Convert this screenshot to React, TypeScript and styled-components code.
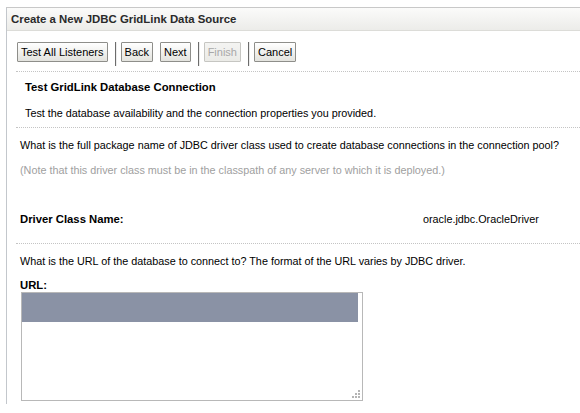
import React from 'react';
import styled, { createGlobalStyle } from 'styled-components';

const GlobalStyle = createGlobalStyle`
  html, body {
    margin: 0;
    padding: 0;
    background: #fff;
    overflow: hidden;
  }
  body {
    font-family: 'Liberation Sans', Arial, sans-serif;
    font-size: 10.8px;
    color: #000;
  }
`;

const Frame = styled.div`
  margin: 7px 0 0 6px;
  border-top: 1px solid #c8c8c8;
  border-left: 1px solid #c3c7cc;
  padding-bottom: 3px;
`;

const Header = styled.div`
  height: 22px;
  display: flex;
  align-items: center;
  padding-left: 4px;
  background: linear-gradient(#fbfbfa, #ecece9);
  border-bottom: 1px solid #dcdcd8;
  font-weight: bold;
  font-size: 11.4px;
  color: #2a2a2a;
`;

const Body = styled.div`
  padding-left: 9px;
  white-space: nowrap;
`;

const Toolbar = styled.div`
  display: flex;
  align-items: flex-start;
  padding: 11px 0 5px 1px;
  border-bottom: 1px dotted #c4c4c4;
`;

const Button = styled.button<{ $disabled?: boolean }>`
  height: 20px;
  margin-right: 7px;
  padding: 0 3px;
  font-family: inherit;
  font-size: 11px;
  color: ${(p) => (p.$disabled ? '#a8a8a8' : '#000')};
  background: ${(p) =>
    p.$disabled
      ? 'linear-gradient(#f4f4f2, #ebebe7)'
      : 'linear-gradient(#ffffff, #e3e3de)'};
  border: 1px solid ${(p) => (p.$disabled ? '#c6c6c2' : '#8e8e8a')};
  border-radius: 1px;
  cursor: default;
`;

const Separator = styled.span`
  width: 1px;
  height: 24px;
  background: #6c6c6c;
  border-right: 1px solid #ececec;
  margin: 0 4px 0 0;
`;

const Section = styled.div`
  padding-left: 9px;
  border-bottom: 1px dotted #c4c4c4;
`;

const SectionTitle = styled.div`
  font-weight: bold;
  font-size: 11.3px;
  line-height: 14px;
  padding-top: 8px;
`;

const SectionText = styled.div`
  line-height: 14px;
  padding: 12px 0 7px;
`;

const Text = styled.div<{ $muted?: boolean; $top: number }>`
  line-height: 14px;
  padding: ${(p) => p.$top}px 0 0 4px;
  color: ${(p) => (p.$muted ? '#a0a0a0' : '#000')};
`;

const FieldRow = styled.div`
  display: grid;
  grid-template-columns: 403px auto;
  line-height: 14px;
  padding: 35px 0 17px 4px;
  border-bottom: 1px dotted #c4c4c4;
`;

const Label = styled.div`
  font-weight: bold;
  font-size: 11.3px;
`;

const UrlLabel = styled(Label)`
  line-height: 13px;
  padding: 11px 0 0 4px;
`;

const UrlBox = styled.div`
  position: relative;
  margin-left: 5px;
  width: 340px;
  height: 107px;
  border: 1px solid #b8b8b8;
  background: #fff;
`;

const Selection = styled.div`
  width: 336px;
  height: 29px;
  background: #8a92a5;
`;

const Grip = styled.svg`
  position: absolute;
  right: 2px;
  bottom: 2px;
`;

export default function App() {
  return (
    <>
      <GlobalStyle />
      <Frame>
        <Header>Create a New JDBC GridLink Data Source</Header>
        <Body>
          <Toolbar>
            <Button>Test All Listeners</Button>
            <Separator />
            <Button>Back</Button>
            <Button>Next</Button>
            <Separator />
            <Button $disabled>Finish</Button>
            <Separator />
            <Button>Cancel</Button>
          </Toolbar>
          <Section>
            <SectionTitle>Test GridLink Database Connection</SectionTitle>
            <SectionText>
              Test the database availability and the connection properties you provided.
            </SectionText>
          </Section>
          <Text $top={10}>
            What is the full package name of JDBC driver class used to create database
            connections in the connection pool?
          </Text>
          <Text $muted $top={11}>
            (Note that this driver class must be in the classpath of any server to which it
            is deployed.)
          </Text>
          <FieldRow>
            <Label>Driver Class Name:</Label>
            <div>oracle.jdbc.OracleDriver</div>
          </FieldRow>
          <Text $top={10}>
            What is the URL of the database to connect to? The format of the URL varies by
            JDBC driver.
          </Text>
          <UrlLabel>URL:</UrlLabel>
          <UrlBox>
            <Selection />
            <Grip width="8" height="8" viewBox="0 0 8 8">
              <g fill="#b4b4b4">
                <rect x="6" y="0" width="2" height="2" />
                <rect x="3" y="3" width="2" height="2" />
                <rect x="6" y="3" width="2" height="2" />
                <rect x="0" y="6" width="2" height="2" />
                <rect x="3" y="6" width="2" height="2" />
                <rect x="6" y="6" width="2" height="2" />
              </g>
            </Grip>
          </UrlBox>
        </Body>
      </Frame>
    </>
  );
}
